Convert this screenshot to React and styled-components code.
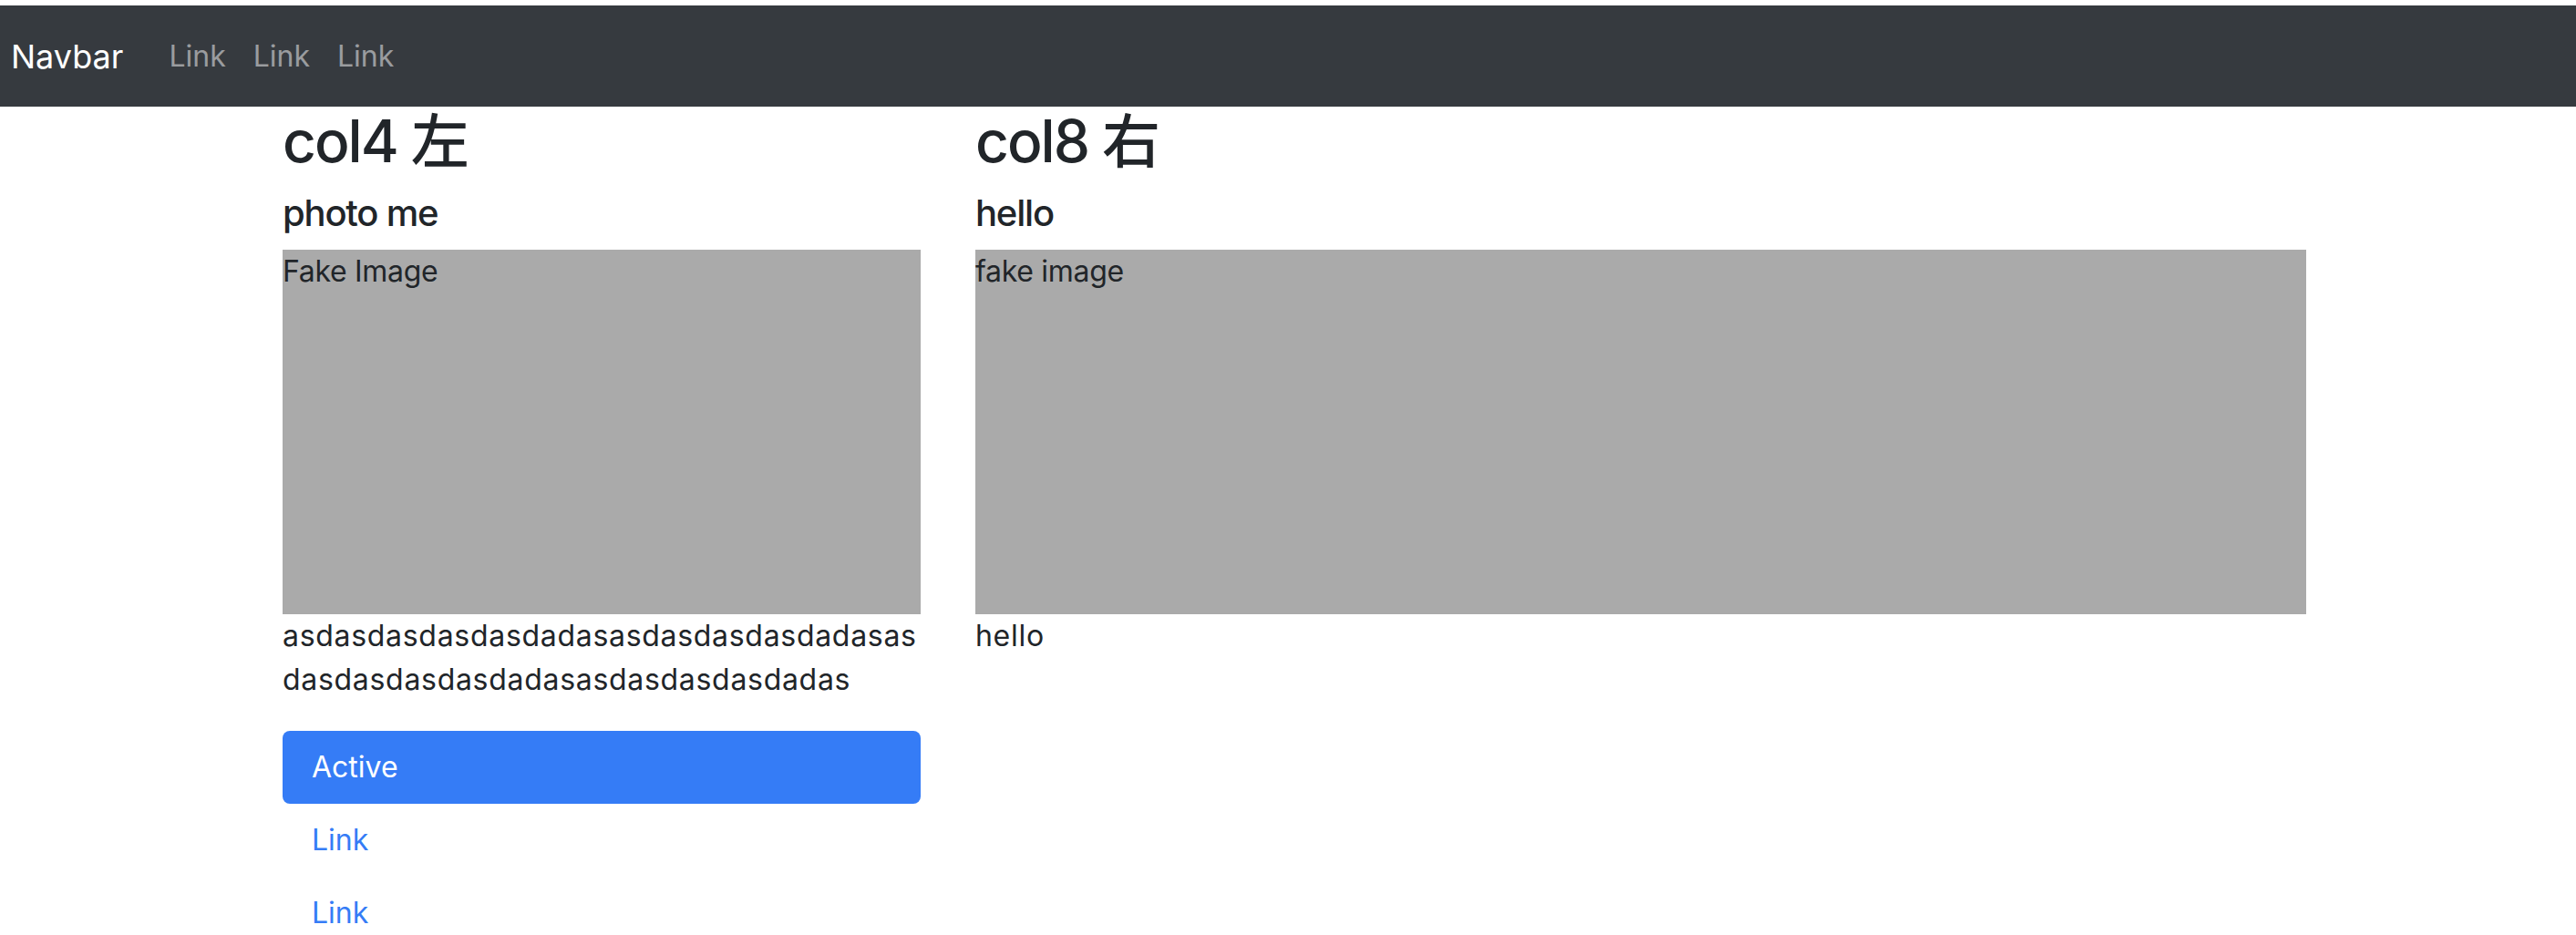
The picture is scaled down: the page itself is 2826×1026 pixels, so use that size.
import styled, { createGlobalStyle } from "styled-components";

const GlobalStyle = createGlobalStyle`
  * { box-sizing: border-box; }
  body {
    margin: 0;
    background: #fff;
    color: #212529;
    font-family: Inter, "Noto Sans CJK SC", sans-serif;
    overflow: hidden;
  }
`;

const navLinks = ["Link", "Link", "Link"];
const pills = [
  { label: "Active", active: true },
  { label: "Link" },
  { label: "Link" },
];

export default function App() {
  return (
    <>
      <GlobalStyle />
      <Navbar>
        <Brand>Navbar</Brand>
        {navLinks.map((l, i) => (
          <NavLink key={i}>{l}</NavLink>
        ))}
      </Navbar>
      <Row>
        <Col $width={760}>
          <Title>col4 左</Title>
          <SubTitle>photo me</SubTitle>
          <FakeImage>Fake Image</FakeImage>
          <Text>
            asdasdasdasdasdadasasdasdasdasdadasas dasdasdasdasdadasasdasdasdasdadas
          </Text>
          <Pills>
            {pills.map((p, i) => (
              <Pill key={i} $active={p.active}>
                {p.label}
              </Pill>
            ))}
          </Pills>
        </Col>
        <Col $width={1520}>
          <Title>col8 右</Title>
          <SubTitle>hello</SubTitle>
          <FakeImage>fake image</FakeImage>
          <Text>hello</Text>
        </Col>
      </Row>
    </>
  );
}

const Navbar = styled.nav`
  margin-top: 6px;
  height: 111px;
  background: #363a3f;
  display: flex;
  align-items: center;
  padding: 0 12px;
`;

const Brand = styled.a`
  font-size: 36px;
  line-height: 60px;
  color: #fff;
  margin-right: 35px;
`;

const NavLink = styled.a`
  font-size: 32px;
  line-height: 48px;
  padding: 0 15px;
  color: rgba(255, 255, 255, 0.5);
`;

const Row = styled.div`
  display: flex;
  margin-left: 280px;
`;

const Col = styled.div`
  width: ${(p) => p.$width}px;
  padding: 0 30px;
`;

const Title = styled.h2`
  font-size: 64px;
  font-weight: 500;
  line-height: 1.2;
  letter-spacing: -2px;
  margin: 0 0 16px;
`;

const SubTitle = styled.h5`
  font-size: 40px;
  font-weight: 500;
  line-height: 1.2;
  letter-spacing: -1.2px;
  margin: 0 0 16px;
`;

const FakeImage = styled.div`
  height: 400px;
  background: #aaaaaa;
  font-size: 32px;
  line-height: 48px;
  letter-spacing: -0.3px;
`;

const Text = styled.p`
  font-size: 32px;
  line-height: 48px;
  letter-spacing: 0.7px;
  margin: 0 0 32px;
`;

const Pills = styled.nav`
  display: flex;
  flex-direction: column;
`;

const Pill = styled.a`
  font-size: 32px;
  line-height: 48px;
  padding: 16px 32px;
  border-radius: 8px;
  color: ${(p) => (p.$active ? "#fff" : "#357cf6")};
  background: ${(p) => (p.$active ? "#357cf6" : "transparent")};
`;
